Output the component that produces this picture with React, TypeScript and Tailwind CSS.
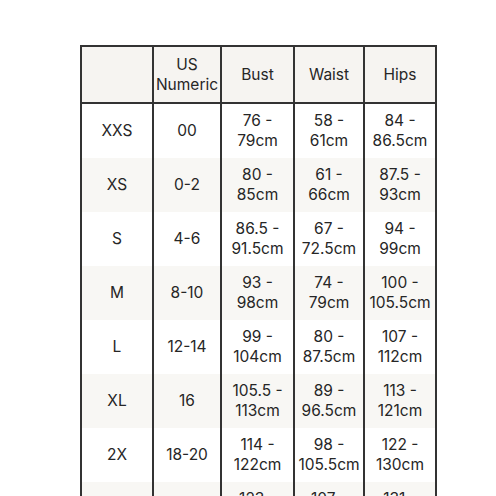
import React from "react";

const rows: [string, string, string, string, string][] = [
  ["XXS", "00", "76 -\n79cm", "58 -\n61cm", "84 -\n86.5cm"],
  ["XS", "0-2", "80 -\n85cm", "61 -\n66cm", "87.5 -\n93cm"],
  ["S", "4-6", "86.5 -\n91.5cm", "67 -\n72.5cm", "94 -\n99cm"],
  ["M", "8-10", "93 -\n98cm", "74 -\n79cm", "100 -\n105.5cm"],
  ["L", "12-14", "99 -\n104cm", "80 -\n87.5cm", "107 -\n112cm"],
  ["XL", "16", "105.5 -\n113cm", "89 -\n96.5cm", "113 -\n121cm"],
  ["2X", "18-20", "114 -\n122cm", "98 -\n105.5cm", "122 -\n130cm"],
  ["3X", "22-24", "123 -\n131cm", "107 -\n114.5cm", "131 -\n139cm"],
];

const gridCls = "grid grid-cols-[70px_68px_73px_70px_72px]";

function Cell({ text, first }: { text: string; first?: boolean }) {
  return (
    <div
      className={
        "flex items-center justify-center text-center whitespace-pre-line " +
        (first ? "" : "border-l-2 border-[#333333]")
      }
    >
      {text}
    </div>
  );
}

export default function App() {
  return (
    <div
      className="w-[496px] h-[496px] overflow-hidden bg-white pt-[45px] pl-[80px] text-[#262626] text-[15.5px] leading-[20px]"
      style={{ fontFamily: "Inter, 'Liberation Sans', sans-serif" }}
    >
      <div className="w-[357px] border-l-2 border-r-2 border-t-2 border-[#333333]">
        <div className={gridCls + " h-[57px] bg-[#f6f4f1] border-b-2 border-[#333333]"}>
          <Cell text="" first />
          <Cell text={"US\nNumeric"} />
          <Cell text="Bust" />
          <Cell text="Waist" />
          <Cell text="Hips" />
        </div>
        {rows.map((r, i) => (
          <div
            key={i}
            className={gridCls + " h-[54px] " + (i % 2 === 0 ? "bg-white" : "bg-[#f8f7f4]")}
          >
            {r.map((t, j) => (
              <Cell key={j} text={t} first={j === 0} />
            ))}
          </div>
        ))}
      </div>
    </div>
  );
}
